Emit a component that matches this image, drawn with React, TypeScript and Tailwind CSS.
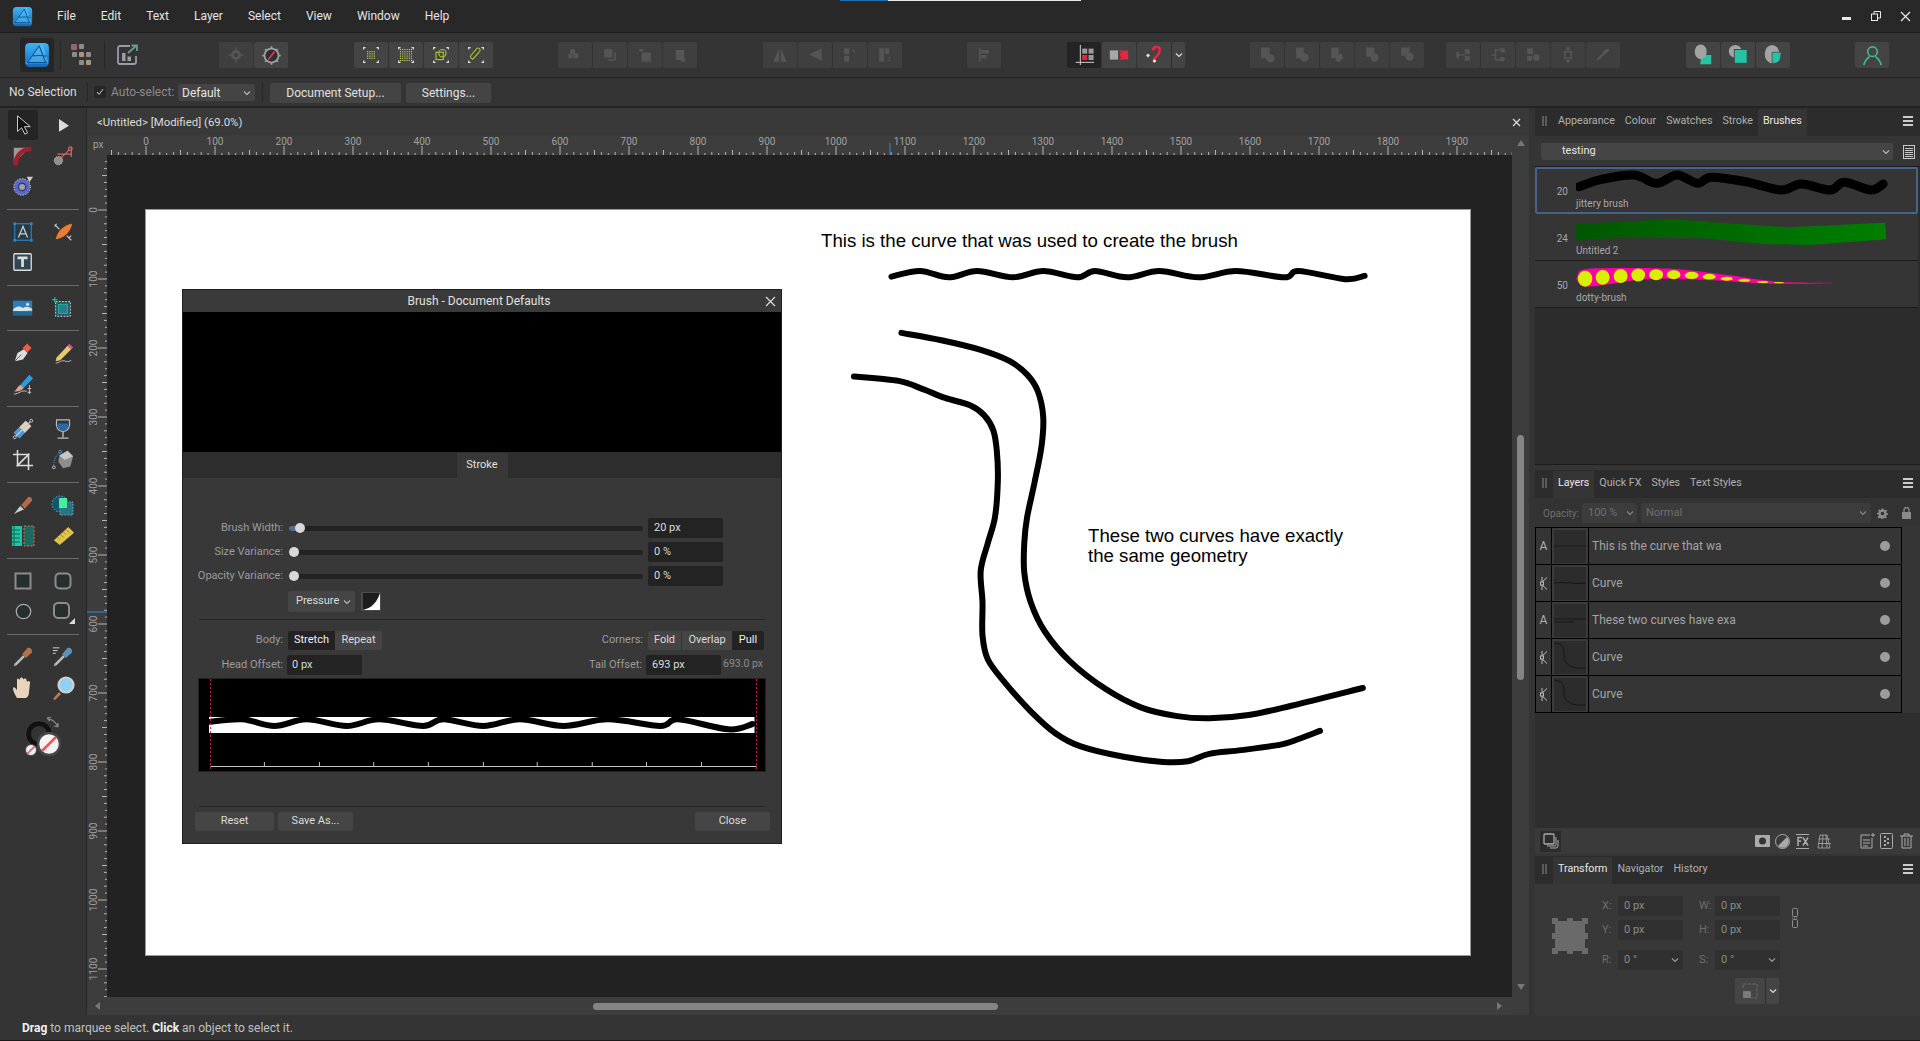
import React from "react";

type P = [number, number];
function smooth(p: P[]) {
  let d = `M${p[0][0]} ${p[0][1]}`;
  for (let i = 0; i < p.length - 1; i++) {
    const a = p[Math.max(i - 1, 0)], b = p[i], c = p[i + 1], e = p[Math.min(i + 2, p.length - 1)];
    d += ` C${b[0] + (c[0] - a[0]) / 6} ${b[1] + (c[1] - a[1]) / 6} ${c[0] - (e[0] - b[0]) / 6} ${c[1] - (e[1] - b[1]) / 6} ${c[0]} ${c[1]}`;
  }
  return d;
}

const Ico = ({ s = 24, children }: { s?: number; children: React.ReactNode }) => (
  <svg width={s} height={s} viewBox="0 0 24 24" fill="none">{children}</svg>
);

const Logo = ({ s }: { s: number }) => (
  <svg width={s} height={s} viewBox="0 0 24 24">
    <defs>
      <linearGradient id={`lg${s}`} x1="0" y1="0" x2="0" y2="1">
        <stop offset="0" stopColor="#3db4f5" />
        <stop offset="1" stopColor="#1468b8" />
      </linearGradient>
    </defs>
    <rect x="1" y="1" width="22" height="22" rx="4" fill={`url(#lg${s})`} />
    <path d="M1 20 L14 2 L17 2 L22 17 L22 20 L8 20 Z" fill="#5cc4f7" opacity=".55" />
    <path d="M3 19 L14 3.5 M14 3.5 L20 19 M7 13 Q14 12 21 13 M3 19 L21 19" stroke="#0e4f8f" strokeWidth="1" fill="none" />
  </svg>
);

const Btn = ({ children, dark, off }: { children?: React.ReactNode; dark?: boolean; off?: boolean }) => (
  <div className={`w-[34px] h-[26px] rounded-[2px] flex items-center justify-center ${dark ? "bg-[#242424]" : off ? "bg-[#3f3f3f]" : "bg-[#444444]"}`}>{children}</div>
);

const Off = ({ children }: { children?: React.ReactNode }) => (
  <Btn off><Ico s={20}><g fill="#555555" stroke="none">{children}</g></Ico></Btn>
);

const Corners = () => (
  <path d="M4 6V4h2M18 4h2v2M20 18v2h-2M6 20H4v-2" stroke="#e8e8e8" strokeWidth="1.2" fill="none" />
);
const Dots = ({ c, n }: { c: string; n: number }) => (
  <g fill={c}>
    {Array.from({ length: n }).flatMap((_, i) =>
      Array.from({ length: n }).map((__, j) => (
        <rect key={`${i}-${j}`} x={12 - (n - 1) * 1.2 + i * 2.4 - 0.6} y={12 - (n - 1) * 1.2 + j * 2.4 - 0.6} width="1.2" height="1.2" />
      ))
    )}
  </g>
);

const Chevron = ({ c = "#bbbbbb" }: { c?: string }) => (
  <svg width="8" height="6" viewBox="0 0 8 6" fill="none"><path d="M1 1.5 L4 4.5 L7 1.5" stroke={c} strokeWidth="1.1" /></svg>
);

function TopBar() {
  return (
    <div className="h-[33px] bg-[#282828] border-b border-[#1d1d1d] flex items-center relative">
      <div className="ml-[12px] w-[45px]"><Logo s={21} /></div>
      <div className="flex gap-[25px] text-[12px] text-[#e4e4e4]">
        {["File", "Edit", "Text", "Layer", "Select", "View", "Window", "Help"].map((m) => <span key={m}>{m}</span>)}
      </div>
      <div className="ml-auto mr-[9px] flex items-center gap-[19px]">
        <svg width="10" height="10" viewBox="0 0 10 10"><rect x="0" y="6" width="9" height="3" fill="#e8e8e8" /></svg>
        <svg width="10" height="10" viewBox="0 0 10 10" fill="none" stroke="#e8e8e8"><rect x=".5" y="3" width="6" height="6.5" /><path d="M3 3V.5h6.5V7H7" /></svg>
        <svg width="11" height="11" viewBox="0 0 11 11" stroke="#e8e8e8" strokeWidth="1.2"><path d="M1 1l9 9M10 1l-9 9" /></svg>
      </div>
      <div className="absolute left-[840px] top-0 w-[48px] h-px bg-[#1a6fb5]" />
      <div className="absolute left-[888px] top-0 w-[193px] h-px bg-[#e8e8e8]" />
    </div>
  );
}

function Toolbar() {
  return (
    <div className="h-[45px] bg-[#343434] border-b border-[#1f1f1f] flex items-center">
      <div className="ml-[20px] w-[34px] h-[34px] bg-[#262626] rounded-[2px] flex items-center justify-center"><Logo s={26} /></div>
      <div className="ml-[6px] w-px h-[28px] bg-[#272727]" />
      <div className="ml-[10px]">
        <svg width="22" height="22" viewBox="0 0 22 22">
          <rect x="0" y="0" width="6" height="6" rx="1" fill="#96666f" /><rect x="8" y="0" width="5" height="5" rx="1" fill="#8c8c8c" />
          <rect x="1" y="8" width="5" height="5" rx="1" fill="#8c8c8c" /><rect x="8" y="8" width="5" height="5" rx="1" fill="#a89678" /><rect x="15" y="8" width="5" height="5" rx="1" fill="#8c8c8c" />
          <rect x="8" y="16" width="5" height="5" rx="1" fill="#8c8c8c" /><rect x="15" y="16" width="5" height="5" rx="1" fill="#a89678" />
        </svg>
      </div>
      <div className="ml-[11px] w-px h-[28px] bg-[#272727]" />
      <div className="ml-[12px]">
        <svg width="22" height="22" viewBox="0 0 22 22" fill="none">
          <path d="M13 2H3a2 2 0 0 0-2 2v14a2 2 0 0 0 2 2h14a2 2 0 0 0 2-2v-6" stroke="#9a9aa8" strokeWidth="1.8" />
          <rect x="5" y="9" width="3.5" height="8" fill="#9a9aa8" /><rect x="10.5" y="12.5" width="3.5" height="4.5" fill="#9a9aa8" />
          <path d="M11 9 L19 2 M14.5 1.5H20V7" stroke="#6f9a92" strokeWidth="1.8" />
        </svg>
      </div>
      <div className="ml-[80px] flex gap-px">
        <Off><circle cx="12" cy="12" r="6" /><circle cx="12" cy="12" r="2.5" fill="#3f3f3f" /><path d="M11 3h2v3h-2zM11 18h2v3h-2zM3 11h3v2H3zM18 11h3v2h-3z" /></Off>
        <Btn>
          <Ico s={21}>
            <circle cx="12" cy="12" r="8" fill="#2f2f2f" stroke="#a0a0a0" strokeWidth="2" />
            <path d="M11 1.5h2v3h-2zM11 19.5h2v3h-2zM1.5 11h3v2h-3zM19.5 11h3v2h-3zM4 5.5L5.5 4l2 2L6 7.5zM18.5 4L20 5.5l-2 2L16.5 6zM4 18.5L6 16.5 7.5 18 5.5 20zM16.5 18l1.5-1.5 2 2L18.5 20z" fill="#a0a0a0" />
            <path d="M8.5 16.5 L15.5 7.5" stroke="#e0354a" strokeWidth="2" />
          </Ico>
        </Btn>
      </div>
      <div className="ml-[66px] flex gap-px">
        <Btn><Ico s={22}><Corners /><Dots c="#d4e833" n={4} /></Ico></Btn>
        <Btn><Ico s={22}><Corners /><Dots c="#cdd95a" n={6} /></Ico></Btn>
        <Btn>
          <Ico s={22}><Corners /><rect x="6.5" y="9" width="8" height="8" stroke="#a8c030" strokeWidth="1.3" /><circle cx="13.5" cy="10" r="4" stroke="#a8c030" strokeWidth="1.3" /></Ico>
        </Btn>
        <Btn>
          <Ico s={22}><Corners /><path d="M8 17 L16 8 a2.2 2.2 0 0 0-3.2-3 L6.5 12.5 a2.2 2.2 0 0 0 3 3.2 L15 9.5" stroke="#a8c030" strokeWidth="1.2" /></Ico>
        </Btn>
      </div>
      <div className="ml-[65px] flex gap-px">
        <Off><rect x="6" y="5" width="6" height="6" /><rect x="10" y="10" width="6" height="6" /><rect x="4" y="11" width="5" height="5" /></Off>
        <Off><rect x="5" y="5" width="10" height="10" /><path d="M17 9v8H9v2h10V9z" /></Off>
        <Off><path d="M5 5h5v3H5z" /><rect x="8" y="9" width="11" height="11" /></Off>
        <Off><rect x="7" y="6" width="10" height="12" /><path d="M18 16v4h-5v-2h3v-2z" /></Off>
      </div>
      <div className="ml-[66px] flex gap-px">
        <Off><path d="M11 4v16H4zM13 4l7 16h-7z" /></Off>
        <Off><path d="M20 4v15L5 11.5z" /></Off>
        <Off><rect x="5" y="4" width="6" height="7" /><rect x="5" y="13" width="6" height="7" /><path d="M14 6h4v4h-1V7h-2z" /></Off>
        <Off><rect x="5" y="4" width="6" height="16" /><rect x="12" y="4" width="5" height="7" /><path d="M17 14h1v5h-4v-1h3z" /></Off>
      </div>
      <div className="ml-[65px]">
        <Off><rect x="6" y="4" width="2" height="16" /><rect x="8" y="6" width="10" height="4" /><rect x="8" y="12" width="7" height="4" /></Off>
      </div>
      <div className="ml-[66px] flex gap-px">
        <Btn dark>
          <Ico s={22}>
            <path d="M8 1v22M3 20h20" stroke="#e0e0e0" strokeWidth="1" />
            <rect x="10" y="5" width="5.5" height="5.5" fill="#9a9a9a" /><rect x="17" y="5" width="5.5" height="5.5" fill="#9a9a9a" />
            <rect x="10" y="12" width="5.5" height="5.5" fill="#e0283f" /><rect x="17" y="12" width="5.5" height="5.5" fill="#9a9a9a" />
          </Ico>
        </Btn>
        <Btn>
          <Ico s={22}>
            <rect x="2" y="7" width="9" height="10" fill="#a8a8a8" />
            <path d="M12 7h10v10H12l3-3h-2v-4h2z" fill="#e0283f" />
          </Ico>
        </Btn>
        <div className="flex">
          <div className="w-[34px] h-[26px] rounded-l-[2px] bg-[#444444] flex items-center justify-center">
            <Ico s={22}>
              <path d="M11 7 Q11 3 15 3 Q19 3 18 8 Q17 13 11 17" stroke="#e0283f" strokeWidth="3" />
              <rect x="4" y="11" width="3" height="3" fill="#e8e8e8" transform="rotate(45 5.5 12.5)" />
              <rect x="11" y="17" width="3" height="3" fill="#e8e8e8" transform="rotate(45 12.5 18.5)" />
            </Ico>
          </div>
          <div className="w-[14px] h-[26px] rounded-r-[2px] bg-[#444444] border-l border-[#2c2c2c] flex items-center justify-center"><Chevron c="#dddddd" /></div>
        </div>
      </div>
      <div className="ml-[65px] flex gap-px">
        <Off><rect x="5" y="3" width="10" height="13" /><circle cx="16" cy="16" r="5" /></Off>
        <Off><rect x="5" y="3" width="9" height="13" /><circle cx="15" cy="15" r="5" /></Off>
        <Off><rect x="5" y="3" width="9" height="13" /><path d="M14 10a5 5 0 1 1-4 8z" /></Off>
        <Off><rect x="5" y="3" width="10" height="11" /><circle cx="15" cy="15" r="5" /></Off>
        <Off><rect x="5" y="3" width="10" height="10" /><circle cx="15" cy="14" r="5" /></Off>
      </div>
      <div className="ml-[22px] flex gap-px">
        <Off><path d="M4 8h3v8H4zM7 11h7v2H7z" /><rect x="14" y="5" width="6" height="6" /><rect x="14" y="13" width="6" height="6" /></Off>
        <Off><path d="M4 11h4V5h6v2H10v10h4v2H8v-6H4z" /><rect x="15" y="4" width="5" height="5" /><circle cx="17" cy="17" r="3" /></Off>
        <Off><rect x="5" y="4" width="7" height="7" /><circle cx="16" cy="15" r="4" /><rect x="5" y="13" width="6" height="6" /></Off>
        <Off><path d="M7 7h10v10H7z M9 9v6h6V9z" /><rect x="10" y="3" width="4" height="3" /><rect x="10" y="18" width="4" height="3" /></Off>
        <Off><path d="M4 17 L18 4l2 2L6 19zM13 6h5v2h-5z" /></Off>
      </div>
      <div className="ml-[66px] flex gap-px">
        <Btn>
          <Ico s={22}><path d="M10 12h11v10H9z" fill="#22c4a4" /><ellipse cx="9.5" cy="8.5" rx="6.5" ry="8" fill="#a3a3a3" /></Ico>
        </Btn>
        <Btn>
          <Ico s={22}><circle cx="9" cy="8" r="7" fill="#a3a3a3" /><rect x="8" y="6" width="14" height="15" fill="#22c4a4" stroke="#444444" strokeWidth="1" /></Ico>
        </Btn>
        <Btn>
          <Ico s={22}><ellipse cx="11" cy="11" rx="8" ry="10" fill="#a3a3a3" /><path d="M11 9h10l-1 7a7 7 0 0 1-7 5h-2z" fill="#22c4a4" stroke="#444444" strokeWidth=".8" /></Ico>
        </Btn>
      </div>
      <div className="ml-[65px]">
        <Btn>
          <Ico s={23}><circle cx="12" cy="8" r="5" stroke="#3fc088" strokeWidth="1.6" /><path d="M3 22 C4 16 8 14 9 13 M21 22 C20 16 16 14 15 13" stroke="#3fc088" strokeWidth="1.6" /></Ico>
        </Btn>
      </div>
    </div>
  );
}

function ContextBar() {
  return (
    <div className="h-[30px] bg-[#343434] border-b-2 border-[#232323] flex items-center text-[12px]">
      <span className="ml-[9px] w-[68px] text-[#dcdcdc]">No Selection</span>
      <div className="ml-[10px] w-px h-[20px] bg-[#272727]" />
      <div className="ml-[6px] w-[12px] h-[12px] bg-[#262626] rounded-[2px] flex items-center justify-center">
        <svg width="8" height="8" viewBox="0 0 8 8" fill="none"><path d="M1 4l2 2.4L7 1.2" stroke="#d0d0d0" strokeWidth="1" /></svg>
      </div>
      <span className="ml-[5px] w-[67px] text-[#8c8c8c]">Auto-select:</span>
      <div className="w-[77px] h-[17px] bg-[#444444] rounded-[2px] flex items-center justify-between pl-[4px] pr-[4px] text-[#e4e4e4] mt-[1px]">
        <span>Default</span><Chevron />
      </div>
      <div className="ml-[7px] w-px h-[20px] bg-[#272727]" />
      <div className="ml-[7px] mt-[2px] w-[131px] h-[20px] bg-[#444444] rounded-[2px] flex items-center justify-center text-[#e0e0e0]">Document Setup...</div>
      <div className="ml-[5px] mt-[2px] w-[85px] h-[20px] bg-[#444444] rounded-[2px] flex items-center justify-center text-[#e0e0e0]">Settings...</div>
    </div>
  );
}

const toolIcons: React.ReactNode[] = [
  <Ico key="0" s={22}><path d="M6 2v17l4.5-4 3.5 7 3-1.4-3.5-6.8H20z" fill="#111111" stroke="#d8d8d8" strokeWidth="1" /></Ico>,
  <Ico key="1" s={16}><path d="M6 3 L21 13 L6 22 Z" fill="#dcdcdc" /></Ico>,
  <Ico key="2" s={22}><path d="M2 3h17L2 20z" fill="#9a9a9a" /><path d="M4 22C4 12 10 5 21 4" stroke="#a41f2d" strokeWidth="5" /></Ico>,
  <Ico key="3" s={22}><path d="M6 10 H21 M21 3 V13 M10 14 L19 5" stroke="#d86a5c" strokeWidth="1.3" /><circle cx="7" cy="17" r="4.5" fill="#8f8f8f" stroke="#cccccc" strokeDasharray="1.5 1" /><circle cx="20" cy="4" r="2" fill="none" stroke="#d86a5c" strokeWidth="1.3" /></Ico>,
  <Ico key="4" s={22}><circle cx="11" cy="13" r="9" fill="#5b68c8" stroke="#dddddd" strokeDasharray="1.5 1.5" /><circle cx="11" cy="13" r="4" fill="#9aa2ad" stroke="#333a66" strokeWidth="1.5" /><path d="M16 2l7 0-4 6z" fill="#cccccc" /></Ico>,
  <Ico key="5" s={22}><rect x="3" y="3" width="18" height="18" fill="#263a46" stroke="#2d86c4" strokeWidth="1.2" /><rect x="1.5" y="1.5" width="3" height="3" fill="#2d86c4" /><rect x="19.5" y="1.5" width="3" height="3" fill="#2d86c4" /><rect x="1.5" y="19.5" width="3" height="3" fill="#2d86c4" /><rect x="19.5" y="19.5" width="3" height="3" fill="#2d86c4" /><path d="M7 18 L12 6 L17 18 M9 14h6" stroke="#cccccc" strokeWidth="1.4" /></Ico>,
  <Ico key="6" s={22}><path d="M4 20 C6 10 14 4 22 3 C20 13 12 19 4 20Z" fill="#ea7d32" /><path d="M3 4l5 5M5 3l-2 3M16 16l5 5M21 16l-3 3" stroke="#cccccc" strokeWidth="1.2" /></Ico>,
  <Ico key="7" s={22}><rect x="2" y="3" width="19" height="18" rx="1" fill="#2e4752" stroke="#dddddd" strokeWidth="1.4" /><path d="M6 7.5h11M11.5 7.5v10" stroke="#dddddd" strokeWidth="3" /></Ico>,
  <Ico key="8" s={22}><rect x="1" y="4" width="21" height="16" fill="#2b7fb5" /><path d="M1 14 C5 9 9 10 12 12 C15 10 18 10 22 13 V15 C16 15 8 16 1 15Z" fill="#d8e4ea" /><path d="M1 20 V16 C7 15 15 16 22 16 V20Z" fill="#1f6795" /><circle cx="17" cy="8" r="1.7" fill="#d8e4ea" /></Ico>,
  <Ico key="9" s={22}><rect x="4" y="5" width="16" height="16" fill="#1e5a68" stroke="#dddddd" strokeDasharray="2 1.4" /><rect x="7" y="8" width="10" height="10" fill="#2c7d8c" stroke="#20b89a" /><path d="M3 0v6M0 3h6" stroke="#20c4a0" strokeWidth="1.2" /></Ico>,
  <Ico key="10" s={22}><path d="M3 21 L6 12 L13 8 L17 12 L12 19Z" fill="#dddddd" /><path d="M3 21 L10 14" stroke="#555555" /><rect x="13" y="3" width="7" height="7" transform="rotate(45 16.5 6.5)" fill="#ee5a42" /></Ico>,
  <Ico key="11" s={22}><path d="M5 17 L17 4 L21 8 L9 20 L4 21Z" fill="#e4cb68" /><path d="M17 4 L19 2 L23 6 L21 8Z" fill="#e94fa0" /><path d="M4 23 C8 23 10 19 15 21 C18 22 19 21 21 20" stroke="#cccccc" strokeWidth=".9" /></Ico>,
  <Ico key="12" s={22}><path d="M9 13 L19 2 L23 6 L13 16Z" fill="#2f9ae4" /><path d="M2 20 C5 19 6 14 9 13 L13 16 C11 19 6 21 2 20Z" fill="#d9a78c" /><path d="M2 23 C8 23 10 18 16 20M19 13v10M17 17h4M17 21h4" stroke="#cccccc" strokeWidth="1" /></Ico>,
  <Ico key="13" s={22}><path d="M2 16 L15 3 L21 9 L8 22Z" fill="#e0a57a" /><path d="M8 10 L15 3 L21 9 L14 16Z" fill="#ddd2bd" /><path d="M2 16 L8 10 L14 16 L8 22Z" fill="#4a9ad8" /><path d="M3 21 L21 3" stroke="#cccccc" strokeWidth="1.2" /><circle cx="3" cy="21" r="1.6" fill="#333" stroke="#ccc" /><circle cx="21" cy="3" r="1.6" fill="#333" stroke="#ccc" /></Ico>,
  <Ico key="14" s={22}><path d="M5 2h14c1 7 0 12-7 13C5 14 4 9 5 2Z" fill="none" stroke="#bbbbbb" strokeWidth="1.3" /><path d="M6 6h12c0 5-2 8-6 8S6 11 6 6Z" fill="#2b6aa8" /><path d="M12 15v6M6 22h12" stroke="#bbbbbb" strokeWidth="1.5" /></Ico>,
  <Ico key="15" s={22}><path d="M6 1v17h17M1 6h17v17M5 19 L19 5" stroke="#dcdcdc" strokeWidth="1.7" /></Ico>,
  <Ico key="16" s={22}><path d="M8 7 L17 2 L23 8 L20 19 L12 21 L7 14Z" fill="#8e8e8e" /><path d="M8 7 L17 2 L23 8 L14 12Z" fill="#c7c7c7" /><circle cx="9" cy="3" r="1.5" fill="none" stroke="#4aa3e8" /><circle cx="2" cy="20" r="1.5" fill="none" stroke="#cccccc" /><path d="M9 4 Q2 8 2 18" stroke="#4aa3e8" strokeDasharray="1.5 1" /></Ico>,
  <Ico key="17" s={22}><path d="M2 22 L9 13 L13 17 L6 20Z" fill="#cfcfcf" /><path d="M10 12 L18 3 Q22 3 22 7 L14 16Z" fill="#b4694a" /></Ico>,
  <Ico key="18" s={24}><circle cx="9" cy="11" r="8" fill="#135766" stroke="#46b5e8" strokeDasharray="1.5 1.5" /><rect x="9" y="9" width="13" height="13" fill="#2d7281" stroke="#46b5e8" strokeDasharray="1.5 1.5" /><path d="M8 5h8v10H8z" fill="#48ec9a" /></Ico>,
  <Ico key="19" s={24}><rect x="1" y="2" width="10" height="20" fill="#22c4a4" /><path d="M3 2v20M1 6h8M1 10h8M1 14h8M1 18h8" stroke="#134f45" strokeWidth=".8" /><rect x="13" y="2" width="10" height="20" fill="#1c6a5f" stroke="#e86a3c" strokeDasharray="2 1.5" /></Ico>,
  <Ico key="20" s={23}><path d="M2 17 L17 3 L23 9 L8 22Z" fill="#e3c24a" /><path d="M6 14l2 2M9 11l3 3M12 8.5l2 2M15 6l3 3" stroke="#8a7424" strokeWidth=".9" /></Ico>,
  <svg key="21" width="18" height="18" viewBox="0 0 18 18"><rect x="1.5" y="1.5" width="15" height="15" fill="#272e30" stroke="#8c8c8c" strokeWidth="2" /></svg>,
  <svg key="22" width="18" height="18" viewBox="0 0 18 18"><rect x="1.5" y="1.5" width="15" height="15" rx="4" fill="#272e30" stroke="#8c8c8c" strokeWidth="2" /></svg>,
  <svg key="23" width="17" height="17" viewBox="0 0 17 17"><circle cx="8.5" cy="8.5" r="7.2" fill="#272e30" stroke="#a8a8a8" strokeWidth="1.3" /></svg>,
  <svg key="24" width="24" height="24" viewBox="0 0 24 24"><rect x="3" y="3" width="15" height="15" rx="4" fill="#272e30" stroke="#8c8c8c" strokeWidth="2" /><path d="M24 18v6h-6z" fill="#dddddd" /></svg>,
  <Ico key="25" s={22}><path d="M2 22 L3 19 L12 10 L14 12 L5 21Z" fill="#bbbbbb" /><path d="M11 9 L17 2 Q22 1 22 7 L15 13Z" fill="#b2704c" /></Ico>,
  <Ico key="26" s={22}><path d="M2 22 L3 19 L12 10 L14 12 L5 21Z" fill="#bbbbbb" /><path d="M11 9 L17 2 Q22 1 22 7 L15 13Z" fill="#5f8fb4" /><path d="M1 2h7M1 5h5M1 8h3" stroke="#dddddd" strokeWidth="1" /></Ico>,
  <Ico key="27" s={24}><path d="M6 22 C3 17 2 14 2 12 C3 10 5 13 6 14 L6 4 C6 2 8 2 8 4 L9 3 C9 1 12 1 12 3 L12 3.5 C13 2 15.5 2 15.5 4 L16 6 C17 4 19.5 5 19 7 L18 16 C18 19 17 21 15 22Z" fill="#e8d4bc" /></Ico>,
  <Ico key="28" s={24}><path d="M2 23 L8 16 L10 18 L4 24Z" fill="#bd7d4e" /><circle cx="15" cy="9" r="7.5" fill="#8fd0f5" stroke="#d0d0d0" strokeWidth="2.2" /></Ico>,
];

const Sep = () => <div className="my-[7px] mx-[4px] h-px bg-[#6a6a6a]" />;

function ToolRows({ from, to, active }: { from: number; to: number; active?: boolean }) {
  return (
    <div className="grid grid-cols-2 justify-items-center">
      {toolIcons.slice(from, to).map((ic, i) => (
        <div key={i} className="h-[30.5px] w-full flex items-center justify-center">
          <div className={`w-[30px] h-[30px] flex items-center justify-center rounded-[3px] ${active && i === 0 ? "bg-[#242424]" : ""}`}>{ic}</div>
        </div>
      ))}
    </div>
  );
}

function LeftTools() {
  return (
    <div className="w-[87px] shrink-0 bg-[#343434] border-r border-[#262626] pt-[2px] px-[3px] flex flex-col">
      <ToolRows from={0} to={5} active />
      <Sep />
      <ToolRows from={5} to={8} />
      <Sep />
      <ToolRows from={8} to={10} />
      <Sep />
      <ToolRows from={10} to={13} />
      <Sep />
      <ToolRows from={13} to={17} />
      <Sep />
      <ToolRows from={17} to={21} />
      <Sep />
      <ToolRows from={21} to={25} />
      <Sep />
      <ToolRows from={25} to={29} />
      <div className="mt-[10px] ml-[14px]">
        <svg width="50" height="50" viewBox="0 0 50 50" fill="none">
          <circle cx="22" cy="21" r="10.500" stroke="#111111" strokeWidth="5" /><circle cx="22" cy="21" r="13.500" stroke="#3d3d3d" strokeWidth="1" />
          <path d="M30 5 Q38 7 41 14 M30 5l4-1M30 5l3 3M41 14l0-4M41 14l-4-1" stroke="#8c8c8c" strokeWidth="1.2" />
          <circle cx="32" cy="31" r="11" fill="#f4f4f4" stroke="#474747" strokeWidth="2.5" /><path d="M25 38 L39 24" stroke="#e85a5a" strokeWidth="2.6" />
          <circle cx="14" cy="37" r="5.5" fill="#efefef" stroke="#4a4a4a" /><path d="M10 41 L18 33" stroke="#d65a5a" strokeWidth="1.6" />
        </svg>
      </div>
    </div>
  );
}

function TopRuler() {
  const t: React.ReactNode[] = [];
  for (let i = -8; i <= 198; i++) {
    const x = 59 + i * 6.9;
    if (x < 21) continue;
    const h = i % 10 === 0 ? 9 : i % 5 === 0 ? 5 : i % 2 === 0 ? 3 : 2;
    t.push(<line key={i} x1={x} x2={x} y1={20 - h} y2={20} stroke="#b4b4b4" strokeWidth="1" />);
    if (i % 10 === 0) t.push(<text key={`l${i}`} x={x} y={10} textAnchor="middle" fontSize="10" fill="#a0a0a0">{i * 10}</text>);
  }
  return (
    <svg width="1425" height="20" viewBox="0 0 1425 20" className="block bg-[#3d3d3d] shrink-0">
      {t}
      <text x="6" y="13" fontSize="10" fill="#a0a0a0">px</text>
      <line x1="803" x2="803" y1="8" y2="20" stroke="#2a8fdc" />
    </svg>
  );
}

function LeftRuler() {
  const t: React.ReactNode[] = [];
  for (let i = -7; i <= 114; i++) {
    const y = 55 + i * 6.9;
    if (y < 2) continue;
    const h = i % 10 === 0 ? 9 : i % 5 === 0 ? 5 : i % 2 === 0 ? 3 : 2;
    t.push(<line key={i} y1={y} y2={y} x1={20 - h} x2={20} stroke="#b4b4b4" strokeWidth="1" />);
    if (i % 10 === 0) t.push(<text key={`l${i}`} transform={`translate(10 ${y}) rotate(-90)`} textAnchor="middle" fontSize="10" fill="#a0a0a0">{i * 10}</text>);
  }
  return (
    <svg width="20" height="842" viewBox="0 0 20 842" className="block bg-[#3d3d3d] shrink-0">
      {t}
      <line x1="0" x2="20" y1="457" y2="457" stroke="#2a8fdc" />
    </svg>
  );
}

const Z = (a: P[]) => a.map(([x, y]) => [820 + x / 2.8, 210 + y / 2.703] as P);
const topCurve: P[] = Z([[200, 180], [280, 165], [360, 182], [440, 165], [540, 182], [625, 165], [720, 182], [770, 165], [860, 182], [950, 165], [1060, 182], [1165, 165], [1300, 182], [1340, 165], [1470, 187], [1525, 178]]);
const curveA: P[] = Z([[228, 332], [340, 352], [450, 378], [530, 408], [580, 445], [610, 490], [625, 560], [620, 640], [600, 740], [580, 830], [572, 900], [572, 980], [590, 1060], [630, 1140], [700, 1220], [800, 1295], [900, 1345], [1000, 1368], [1090, 1374], [1200, 1365], [1320, 1340], [1520, 1292]]);
const curveB: P[] = Z([[95, 450], [220, 462], [290, 485], [350, 508], [420, 528], [460, 555], [485, 595], [495, 650], [498, 730], [490, 830], [470, 900], [450, 975], [455, 1060], [455, 1150], [470, 1215], [520, 1280], [590, 1355], [660, 1415], [730, 1450], [850, 1478], [960, 1492], [1030, 1490], [1090, 1470], [1180, 1460], [1290, 1445], [1340, 1430], [1400, 1408]]);

function Page() {
  return (
    <div className="absolute left-[39px] top-[55px] w-[1324px] h-[745px] bg-white outline outline-1 outline-[#9a9a9a] text-black font-['Liberation_Sans',sans-serif]">
      <svg width="1324" height="745" viewBox="146 210 1324 745" className="absolute inset-0" fill="none" stroke="#000000" strokeWidth="6" strokeLinecap="round">
        <path d={smooth(topCurve)} />
        <path d={smooth(curveA)} />
        <path d={smooth(curveB)} />
      </svg>
      <div className="absolute left-[675px] top-[20px] text-[18.67px] leading-[22px] whitespace-nowrap">This is the curve that was used to create the brush</div>
      <div className="absolute left-[942px] top-[316px] text-[18.67px] leading-[19.6px] whitespace-nowrap">These two curves have exactly<br />the same geometry</div>
    </div>
  );
}

const SliderRow = ({ label, value, thumb, fill }: { label: string; value: string; thumb: string; fill?: boolean }) => (
  <div className="flex items-center h-[20px]">
    <div className="w-[100px] text-right text-[#9c9c9c]">{label}</div>
    <div className="ml-[6px] w-[354px] h-[5px] rounded-full bg-[#232323] relative">
      {fill && <div className="absolute left-0 top-0 h-[5px] w-[10px] bg-[#4f6f95] rounded-l-full" />}
      <div className={`absolute top-[-3px] w-[10px] h-[10px] rounded-full bg-[#d8d8d8] ${thumb}`} />
    </div>
    <div className="ml-[5px] w-[75px] h-[20px] rounded-[2px] bg-[#232323] flex items-center pl-[6px] text-[#dcdcdc]">{value}</div>
  </div>
);

const previewPts: P[] = ([[100, 455], [180, 448], [260, 468], [340, 448], [440, 468], [520, 448], [630, 468], [680, 448], [780, 468], [870, 448], [980, 468], [1090, 448], [1220, 468], [1265, 448], [1390, 478], [1450, 462]] as P[]).map(([x, y]) => [x / 2.489 - 28, y / 3 - 108] as P);
const previewTicks = [235, 372, 507, 643, 780, 914, 1051, 1186, 1323].map((x) => x / 2.489 - 28);

function Dialog() {
  return (
    <div className="absolute left-[75px] top-[134px] w-[600px] h-[555px] bg-[#383838] border border-[#1f1f1f] flex flex-col text-[11px]">
      <div className="h-[22px] shrink-0 bg-[#3a3a3a] flex items-center justify-center relative text-[#e0e0e0] text-[12px] pr-[6px]">
        Brush - Document Defaults
        <svg className="absolute right-[5px] top-[6px]" width="11" height="11" viewBox="0 0 11 11" stroke="#e0e0e0" strokeWidth="1.1"><path d="M1 1l9 9M10 1l-9 9" /></svg>
      </div>
      <div className="h-[140px] shrink-0 bg-black" />
      <div className="h-[26px] shrink-0 bg-[#2d2d2d] flex justify-center items-end">
        <div className="w-[51px] h-[25px] bg-[#383838] flex items-center justify-center text-[#e0e0e0]">Stroke</div>
      </div>
      <div className="pt-[40px] flex flex-col gap-[4px]">
        <SliderRow label="Brush Width:" value="20 px" thumb="left-[6px]" fill />
        <SliderRow label="Size Variance:" value="0 %" thumb="left-0" />
        <SliderRow label="Opacity Variance:" value="0 %" thumb="left-0" />
      </div>
      <div className="mt-[5px] flex items-center pl-[105px]">
        <div className="w-[67px] h-[21px] bg-[#454545] rounded-[2px] flex items-center justify-between pl-[8px] pr-[4px] text-[#dcdcdc]">Pressure <Chevron /></div>
        <div className="ml-[6px] w-[20px] h-[19px] bg-[#4a4a4a] flex items-center justify-center">
          <svg width="17" height="17" viewBox="0 0 17 17"><rect width="17" height="17" fill="#1c1c1c" /><path d="M0 17 C8 15 14 10 17 0 V17Z" fill="#ffffff" /></svg>
        </div>
      </div>
      <div className="mt-[7px] mx-[16px] h-px bg-[#262626]" />
      <div className="mt-[11px] flex items-center h-[19px]">
        <div className="w-[100px] text-right text-[#9c9c9c]">Body:</div>
        <div className="ml-[5px] w-[47px] h-[19px] bg-[#232323] rounded-l-[2px] flex items-center justify-center text-[#f0f0f0]">Stretch</div>
        <div className="w-[47px] h-[19px] bg-[#454545] rounded-r-[2px] flex items-center justify-center text-[#dcdcdc]">Repeat</div>
        <div className="ml-auto text-[#9c9c9c]">Corners:</div>
        <div className="ml-[5px] w-[33px] h-[19px] bg-[#454545] rounded-l-[2px] flex items-center justify-center text-[#dcdcdc]">Fold</div>
        <div className="w-[51px] h-[19px] bg-[#454545] border-l border-[#333333] flex items-center justify-center text-[#dcdcdc]">Overlap</div>
        <div className="w-[32px] h-[19px] bg-[#232323] rounded-r-[2px] flex items-center justify-center text-[#f0f0f0] mr-[17px]">Pull</div>
      </div>
      <div className="mt-[5px] flex items-center h-[20px]">
        <div className="w-[100px] text-right text-[#9c9c9c]">Head Offset:</div>
        <div className="ml-[4px] w-[75px] h-[20px] rounded-[2px] bg-[#232323] flex items-center pl-[5px] text-[#dcdcdc]">0 px</div>
        <div className="ml-auto text-[#9c9c9c]">Tail Offset:</div>
        <div className="ml-[4px] w-[75px] h-[20px] rounded-[2px] bg-[#232323] flex items-center pl-[6px] text-[#dcdcdc]">693 px</div>
        <div className="ml-[2px] mr-[15px] w-[43px] text-[#8c8c8c] text-[10.5px] whitespace-nowrap -mt-[2px]">693.0 px</div>
      </div>
      <div className="mt-[3px] ml-[15px] w-[568px] h-[94px] border border-[#222222] bg-black shrink-0">
        <svg width="566" height="92" viewBox="1 1 566 92" className="block">
          <rect x="11" y="39" width="545.5" height="16" fill="#ffffff" />
          <path d={smooth(previewPts)} fill="none" stroke="#000000" strokeWidth="6" strokeLinecap="round" />
          <line x1="12.6" x2="558.6" y1="88.5" y2="88.5" stroke="#c4c4c4" />
          {previewTicks.map((x) => <line key={x} x1={x} x2={x} y1="84" y2="88" stroke="#c4c4c4" />)}
          <line x1="12.6" x2="12.6" y1="1" y2="93" stroke="#e0202c" strokeDasharray="2 2" />
          <line x1="558.6" x2="558.6" y1="1" y2="93" stroke="#e0202c" strokeDasharray="2 2" />
        </svg>
      </div>
      <div className="mt-[34px] mx-[16px] h-px bg-[#262626]" />
      <div className="mt-[5px] flex pl-[12px] pr-[11px] text-[#dcdcdc]">
        <div className="w-[79px] h-[19px] bg-[#454545] rounded-[2px] flex items-center justify-center">Reset</div>
        <div className="ml-[4px] w-[75px] h-[19px] bg-[#454545] rounded-[2px] flex items-center justify-center">Save As...</div>
        <div className="ml-auto w-[75px] h-[19px] bg-[#454545] rounded-[2px] flex items-center justify-center">Close</div>
      </div>
    </div>
  );
}

const ArrowIcon = ({ d }: { d: string }) => (
  <svg width="8" height="8" viewBox="0 0 8 8"><path d={d} fill="#777777" /></svg>
);

function Center() {
  return (
    <div className="w-[1442px] shrink-0 flex flex-col bg-[#343434]">
      <div className="h-[27px] shrink-0 bg-[#393939] flex items-center text-[11.4px] text-[#dcdcdc] pt-[2px]">
        <span className="ml-[10px]">&lt;Untitled&gt; [Modified] (69.0%)</span>
        <svg className="ml-auto mr-[8px]" width="9" height="9" viewBox="0 0 9 9" stroke="#dddddd" strokeWidth="1.2"><path d="M1 1l7 7M8 1l-7 7" /></svg>
      </div>
      <div className="flex flex-1 min-h-0">
        <div className="w-[1425px] shrink-0 flex flex-col">
          <TopRuler />
          <div className="flex flex-1 min-h-0">
            <LeftRuler />
            <div className="relative flex-1 bg-[#222222] overflow-hidden">
              <Page />
              <Dialog />
            </div>
          </div>
          <div className="h-[18px] shrink-0 bg-[#3d3d3d] flex items-center">
            <div className="ml-[7px]"><ArrowIcon d="M6 0v8L1 4z" /></div>
            <div className="ml-[491px] w-[405px] h-[7px] rounded-full bg-[#858585]" />
            <div className="ml-[497px]"><ArrowIcon d="M2 0v8l5-4z" /></div>
          </div>
        </div>
        <div className="w-[17px] shrink-0 bg-[#3c3c3c] flex flex-col items-center pt-[4px]">
          <ArrowIcon d="M0 7h8L4 1z" />
          <div className="mt-[288px] w-[7px] h-[245px] rounded-full bg-[#858585]" />
          <div className="mt-[303px]"><ArrowIcon d="M0 1h8L4 7z" /></div>
        </div>
      </div>
    </div>
  );
}

const Grip = () => (
  <div className="w-[18px] flex justify-center shrink-0">
    <svg width="5" height="10" viewBox="0 0 5 10" stroke="#8a8a8a"><path d="M1 0v10M4 0v10" /></svg>
  </div>
);
const Burger = () => (
  <svg className="ml-auto mr-[7px]" width="10" height="10" viewBox="0 0 10 10" fill="#cccccc"><rect y="0" width="10" height="2" /><rect y="4" width="10" height="2" /><rect y="8" width="10" height="2" /></svg>
);

function PanelTabs({ tabs, active }: { tabs: string[]; active: string }) {
  return (
    <div className="h-[28px] shrink-0 bg-[#2c2c2c] flex items-end">
      <div className="h-[28px] flex items-center pb-[2px]"><Grip /></div>
      {tabs.map((t) => (
        <div key={t} className={`h-[27px] px-[5px] pb-[3px] flex items-center text-[10.7px] ${t === active ? "bg-[#353535] text-[#e8e8e8]" : "text-[#b0b0b0]"}`}>{t}</div>
      ))}
      <div className="h-[28px] flex items-center flex-1 pb-[2px]"><Burger /></div>
    </div>
  );
}

const brushPts: P[] = ([[735, 560], [790, 538], [870, 525], [925, 550], [975, 525], [1025, 550], [1060, 532], [1150, 547], [1230, 570], [1280, 552], [1350, 570], [1385, 547], [1450, 570], [1480, 552]] as P[]).map(([x, y]) => [x / 2.45 - 297, y / 3 - 170] as P);
const green = ([[728, 672], [960, 658], [1100, 670], [1250, 682], [1485, 668], [1488, 718], [1300, 735], [1180, 732], [1040, 715], [850, 712], [728, 722]] as P[]).map(([x, y]) => `${x / 2.45 - 297},${y / 3 - 217}`).join(" ");
const pink: P[] = ([[735, 813], [780, 805], [960, 806], [1100, 825], [1220, 845], [1360, 849], [1200, 851], [1050, 840], [900, 838], [760, 860], [728, 838]] as P[]).map(([x, y]) => [x / 2.45 - 297, y / 3 - 264] as P);
const dots = [[750, 836, 7.2, 8], [793, 832, 7, 7.4], [837, 828, 7, 7], [880, 825, 7, 6.4], [924, 824, 7, 5.5], [967, 824, 6.8, 4.5], [1011, 826, 6.8, 3.6], [1054, 830, 6.5, 2.8], [1097, 836, 6, 2], [1140, 841, 6, 1.5], [1185, 846, 5.5, 1], [1225, 848, 5, .7]];

const BrushRow = ({ num, name, sel, children }: { num: string; name: string; sel?: boolean; children: React.ReactNode }) => (
  <div className={`h-[47px] flex shrink-0 bg-[#353535] border-b border-[#1c1c1c] ${sel ? "outline-2 -outline-offset-2 outline-[#45648a] rounded-[2px]" : ""}`}>
    <div className="w-[41px] shrink-0 pt-[19px] pr-[8px] text-right text-[10px] text-[#a8a8a8] leading-[12px]">{num}</div>
    <div className="flex flex-col pt-[3px]">
      <svg width="320" height="28" viewBox="0 0 320 28" className="block shrink-0" fill="none">{children}</svg>
      <div className="text-[10px] leading-[12px] text-[#a8a8a8]">{name}</div>
    </div>
  </div>
);

const LayerIconA = () => <span className="text-[12px] text-[#b0b0b0]">A</span>;
const LayerIconC = () => (
  <svg width="9" height="13" viewBox="0 0 9 13" fill="none" stroke="#b8b8b8"><path d="M3 0v13M8 .5L1.5 6.5 8 12.5" /><rect x="1.5" y="5" width="3" height="3" fill="#333" /></svg>
);

const layers: { a: boolean; t: string; th: React.ReactNode }[] = [
  { a: true, t: "This is the curve that wa", th: <path d="M0 16h32" stroke="#151515" strokeWidth=".6" /> },
  { a: false, t: "Curve", th: <path d="M0 16q8-1 16 0t16 0" stroke="#111111" strokeWidth=".8" /> },
  { a: true, t: "These two curves have exa", th: <><path d="M0 15h32" stroke="#111" strokeWidth=".7" /><path d="M0 18h20" stroke="#111" strokeWidth=".7" /></> },
  { a: false, t: "Curve", th: <path d="M0 2C8 3 10 5 10 12s0 10 8 14q6 2 14 1" stroke="#111111" strokeWidth=".8" /> },
  { a: false, t: "Curve", th: <path d="M0 2C8 3 10 5 10 12s0 10 8 14q6 2 14 1" stroke="#111111" strokeWidth=".8" /> },
];

const TF = ({ l, v, chev }: { l: string; v: string; chev?: boolean }) => (
  <div className="flex items-center">
    <span className="w-[15px] text-[#6e6e6e] text-[11px]">{l}</span>
    <div className="ml-[1px] w-[65px] h-[20px] bg-[#303030] rounded-[2px] flex items-center justify-between pl-[6px] pr-[4px] text-[#8c8c8c] text-[11px]">
      <span>{v}</span>{chev && <Chevron c="#999999" />}
    </div>
  </div>
);

function RightPanels() {
  return (
    <div className="w-[385px] ml-[6px] shrink-0 flex flex-col bg-[#353535]">
      <PanelTabs tabs={["Appearance", "Colour", "Swatches", "Stroke", "Brushes"]} active="Brushes" />
      <div className="h-[30px] shrink-0 flex items-center pl-[6px] pt-[1px] bg-[#353535]">
        <div className="w-[352px] h-[17px] bg-[#454545] rounded-[2px] flex items-center justify-between pl-[21px] pr-[3px] text-[#e4e4e4] text-[11px]">testing <Chevron /></div>
        <svg className="ml-[10px]" width="12" height="14" viewBox="0 0 12 14" fill="#c8c8c8"><path d="M0 0h12v14H0zM1 1v12h10V1z" /><rect x="2" y="3" width="8" height="1" /><rect x="2" y="5" width="8" height="1" /><rect x="2" y="7" width="8" height="1" /><rect x="2" y="9" width="8" height="1" /><rect x="2" y="11" width="8" height="1" /></svg>
      </div>
      <div className="h-[299px] shrink-0 bg-[#2c2c2c] border-t border-b border-[#1c1c1c] flex flex-col pr-[2px]">
        <BrushRow num="20" name="jittery brush" sel>
          <path d={smooth(brushPts)} stroke="#000000" strokeWidth="9" strokeLinecap="round" />
        </BrushRow>
        <BrushRow num="24" name="Untitled 2">
          <defs><linearGradient id="gr" x1="0" x2="1" y1="0" y2="0"><stop offset="0" stopColor="#005600" /><stop offset="1" stopColor="#007f00" /></linearGradient></defs>
          <polygon points={green} fill="url(#gr)" />
        </BrushRow>
        <BrushRow num="50" name="dotty-brush">
          <path d={smooth(pink) + "Z"} fill="#ff00a0" />
          {dots.map(([x, y, rx, ry]) => <ellipse key={x} cx={x / 2.45 - 297} cy={y / 3 - 264} rx={rx} ry={ry} fill="#d8f000" />)}
        </BrushRow>
      </div>
      <div className="h-[5px] shrink-0" />
      <PanelTabs tabs={["Layers", "Quick FX", "Styles", "Text Styles"]} active="Layers" />
      <div className="h-[29px] shrink-0 flex items-center pl-[8px] pt-[1px] text-[11px] text-[#6e6e6e] bg-[#333333]">
        <span className="w-[39px] text-[10px]">Opacity:</span>
        <div className="w-[55px] h-[20px] rounded-[2px] bg-[#3c3c3c] flex items-center justify-between pl-[6px] pr-[3px]">100 % <Chevron c="#888888" /></div>
        <div className="ml-[4px] w-[230px] h-[20px] rounded-[2px] bg-[#3c3c3c] flex items-center justify-between pl-[5px] pr-[4px]">Normal <Chevron c="#888888" /></div>
        <svg className="ml-[6px]" width="11" height="11" viewBox="0 0 24 24" fill="#8a8a8a"><path d="M10 1h4l.6 3 2.6 1 2.5-1.700 2.800 2.800L20 8.600l1 2.400 3 1v2.500l-3 .6-1 2.500 1.700 2.500-2.800 2.800-2.500-1.700-2.400 1-.6 3h-4l-.6-3-2.400-1-2.500 1.700-2.800-2.800L4 16.400l-1-2.400-3-.6V11l3-.6 1-2.400L2.300 5.500l2.800-2.800L7.600 4.400 10 3.500zM12 8a4 4 0 1 0 0 8 4 4 0 0 0 0-8z" /></svg>
        <svg className="ml-[14px]" width="9" height="12" viewBox="0 0 9 12" fill="#8a8a8a"><rect y="5" width="9" height="7" /><path d="M2 5V3a2.500 2.500 0 0 1 5 0v2" fill="none" stroke="#8a8a8a" strokeWidth="1.3" /></svg>
      </div>
      <div className="w-[367px] shrink-0 border-t border-l border-r border-black">
        {layers.map((l, i) => (
          <div key={i} className="h-[37px] flex border-b border-black bg-[#353535] text-[12px]">
            <div className="w-[16px] shrink-0 border-r border-black flex items-center justify-center">{l.a ? <LayerIconA /> : <LayerIconC />}</div>
            <div className="w-[37px] shrink-0 border-r border-black flex items-center justify-center bg-[#3b3b3b]">
              <svg width="32" height="33" viewBox="0 0 32 33" fill="none" className="bg-[#2c2c2c]">{l.th}</svg>
            </div>
            <span className="ml-[3px] self-center text-[#a4a4a4]">{l.t}</span>
            <div className="ml-auto mr-[11px] self-center w-[10px] h-[10px] rounded-full bg-[#9c9c9c]" />
          </div>
        ))}
      </div>
      <div className="h-[115px] shrink-0 bg-[#2e2e2e]" />
      <div className="h-[26px] shrink-0 bg-[#3a3a3a] flex items-center">
        <div className="ml-[5px] w-[21px] h-[21px] bg-[#2c2c2c] flex items-center justify-center">
          <svg width="16" height="16" viewBox="0 0 16 16" fill="none" stroke="#aaaaaa"><rect x="1" y="1" width="10" height="10" rx="1" strokeWidth="1.3" /><path d="M13 4v8a1 1 0 0 1-1 1H4M15 7v6a2 2 0 0 1-2 2H7" /></svg>
        </div>
        <div className="ml-[194px] flex items-center gap-[5px]">
          <svg width="15" height="13" viewBox="0 0 15 13"><rect width="15" height="12" rx="1" fill="#aaaaaa" /><circle cx="7.500" cy="6" r="3.500" fill="#333" /></svg>
          <svg width="15" height="15" viewBox="0 0 15 15" fill="none"><circle cx="7.500" cy="7.500" r="7" stroke="#aaaaaa" /><path d="M12 3 A6 6 0 0 1 3 12Z" fill="#aaaaaa" /></svg>
          <svg width="15" height="15" viewBox="0 0 15 15" fill="none" stroke="#aaaaaa"><path d="M1 .5h13M1 14.500h13" /><path d="M3 12V3.500h4M3 7h3M8 3.500l5 8M13 3.500l-5 8" strokeWidth="1.5" /></svg>
          <svg className="ml-[2px]" width="15" height="15" viewBox="0 0 15 15" fill="none" stroke="#aaaaaa"><path d="M3 1h7l3 13H1zM1.500 5h11.500M1 9.500h13M6 1L5 14M9 1l1 13" strokeWidth=".8" /></svg>
        </div>
        <div className="ml-[28px] flex items-center gap-[5px]">
          <svg width="15" height="16" viewBox="0 0 15 16" fill="none" stroke="#aaaaaa"><path d="M10 2H1v13h11V5" /><path d="M3 7h7M3 10h7M3 13h5M13 0v4M11 2h4" /></svg>
          <svg width="13" height="16" viewBox="0 0 13 16"><rect x=".5" y=".5" width="12" height="15" rx="1" fill="none" stroke="#aaaaaa" /><path d="M4 3h2v2H4zM7 5h2v2H7zM4 7h2v2H4zM7 9h2v2H7zM4 11h2v2H4z" fill="#aaaaaa" /></svg>
          <svg className="ml-[2px]" width="13" height="16" viewBox="0 0 13 16" fill="none" stroke="#aaaaaa"><path d="M0 3h13M4 3V1h5v2M2 3v12h9V3M5 5v8M8 5v8" /></svg>
        </div>
      </div>
      <div className="h-[2px] shrink-0" />
      <PanelTabs tabs={["Transform", "Navigator", "History"]} active="Transform" />
      <div className="flex-1 flex bg-[#383838] pt-[12px]">
        <div className="ml-[17px] mt-[22px]">
          <svg width="36" height="36" viewBox="0 0 36 36" fill="#6a6a6a">
            <rect x="3" y="3" width="30" height="30" />
            <rect width="6" height="6" /><rect x="15" width="6" height="6" /><rect x="30" width="6" height="6" />
            <rect y="15" width="6" height="6" /><rect x="30" y="15" width="6" height="6" />
            <rect y="30" width="6" height="6" /><rect x="15" y="30" width="6" height="6" /><rect x="30" y="30" width="6" height="6" />
          </svg>
        </div>
        <div className="ml-[14px] flex flex-col">
          <div className="flex flex-col gap-[4px]">
            <div className="flex gap-[16px]"><TF l="X:" v="0 px" /><TF l="W:" v="0 px" /></div>
            <div className="flex gap-[16px]"><TF l="Y:" v="0 px" /><TF l="H:" v="0 px" /></div>
          </div>
          <div className="mt-[10px] flex gap-[16px]"><TF l="R:" v="0 °" chev /><TF l="S:" v="0 °" chev /></div>
          <div className="mt-[8px] ml-[133px] flex">
            <div className="w-[30px] h-[26px] bg-[#454545] rounded-l-[2px] flex items-center justify-center">
              <svg width="16" height="16" viewBox="0 0 16 16" fill="none"><path d="M1 5V1h14v14H9" stroke="#6e6e6e" strokeDasharray="3 1.500" /><rect x="1" y="8" width="8" height="7" rx="1" fill="#7a7a7a" /></svg>
            </div>
            <div className="w-[14px] h-[26px] border-l border-[#2e2e2e] bg-[#454545] rounded-r-[2px] flex items-center justify-center"><Chevron c="#dddddd" /></div>
          </div>
        </div>
        <div className="ml-[12px] mt-[12px]">
          <svg width="7" height="20" viewBox="0 0 7 20" fill="none" stroke="#8c8c8c"><rect x=".5" y=".5" width="5" height="8" rx="1" /><rect x=".5" y="11.500" width="5" height="8" rx="1" /><path d="M0 10h6" strokeDasharray="1 1" /></svg>
        </div>
      </div>
    </div>
  );
}

export default function App() {
  return (
    <div className="w-[1920px] h-[1041px] overflow-hidden flex flex-col relative bg-[#343434] font-['Roboto',sans-serif]">
      <TopBar />
      <Toolbar />
      <ContextBar />
      <div className="h-[907px] shrink-0 flex">
        <LeftTools />
        <Center />
        <RightPanels />
      </div>
      <div className="h-[25px] shrink-0 flex items-center pl-[22px] text-[12px] text-[#c0c0c0] bg-[#343434]">
        <b className="text-[#f0f0f0]">Drag</b>&nbsp;to marquee select.&nbsp;<b className="text-[#f0f0f0]">Click</b>&nbsp;an object to select it.
      </div>
      <div className="h-px bg-[#1a1a1a] shrink-0" />
    </div>
  );
}
